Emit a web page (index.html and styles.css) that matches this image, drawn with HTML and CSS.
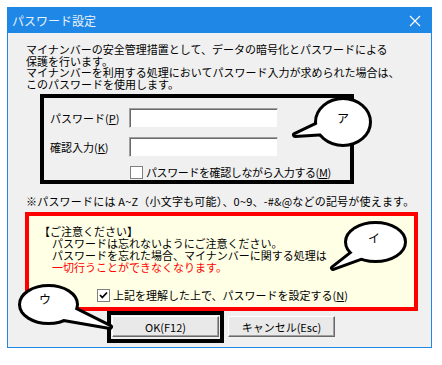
FILE: index.html
```html
<!DOCTYPE html>
<html lang="ja">
<head>
    <meta charset="UTF-8">
    <title>パスワード設定</title>
    <link rel="stylesheet" href="styles.css">
</head>
<body>
    <div class="window">
        <div class="titlebar">
            <span class="title">パスワード設定</span>
            <svg class="close" width="12" height="12" viewBox="0 0 12 12">
                <path d="M1 1L11 11M11 1L1 11" stroke="#fff" stroke-width="1.2"/>
            </svg>
        </div>

        <div class="content">
            <p class="intro">
                マイナンバーの安全管理措置として、データの暗号化とパスワードによる<br>
                保護を行います。<br>
                マイナンバーを利用する処理においてパスワード入力が求められた場合は、<br>
                このパスワードを使用します。
            </p>

            <!-- ア: 入力欄 -->
            <div class="field-box">
                <div class="field-row">
                    <label class="field-label">パスワード(<u>P</u>)</label>
                    <input type="password" class="text-input">
                </div>
                <div class="field-row">
                    <label class="field-label">確認入力(<u>K</u>)</label>
                    <input type="password" class="text-input">
                </div>
                <div class="check-row indent">
                    <span class="checkbox"></span>
                    <span class="tight">パスワードを確認しながら入力する(<u>M</u>)</span>
                </div>
            </div>

            <p class="note">※パスワードには A~Z（小文字も可能）、0~9、-#&amp;@などの記号が使えます。</p>

            <!-- イ: 注意事項 -->
            <div class="notice">
                <div class="notice-line">【ご注意ください】</div>
                <div class="notice-line sub">パスワードは忘れないようにご注意ください。</div>
                <div class="notice-line sub">パスワードを忘れた場合、マイナンバーに関する処理は</div>
                <div class="notice-line sub warn">一切行うことができなくなります。</div>
                <div class="check-row agree">
                    <span class="checkbox">
                        <svg width="11" height="11" viewBox="0 0 11 11">
                            <path d="M2 5L4.3 7.5L9 2.5" fill="none" stroke="#000" stroke-width="1.8"/>
                        </svg>
                    </span>
                    <span>上記を理解した上で、パスワードを設定する(<u>N</u>)</span>
                </div>
            </div>

            <!-- ウ: ボタン -->
            <div class="buttons">
                <div class="ok-box">
                    <button class="btn">OK(F12)</button>
                </div>
                <button class="btn cancel">キャンセル(Esc)</button>
            </div>
        </div>

        <!-- 吹き出し -->
        <svg class="callouts" width="425" height="341" viewBox="7 7 425 341">
            <g fill="#fff" stroke="#000" stroke-width="6" stroke-linejoin="round">
                <ellipse cx="343" cy="122" rx="26" ry="22"/>
                <polygon points="318,124 295,135 327,133"/>
                <ellipse cx="375.5" cy="242" rx="28.5" ry="18"/>
                <polygon points="356,250 333,268 366,256"/>
                <ellipse cx="48.5" cy="304.5" rx="27.5" ry="17.5"/>
                <polygon points="66,305 110,327 58,318"/>
            </g>
            <g fill="#fff">
                <ellipse cx="343" cy="122" rx="26" ry="22"/>
                <polygon points="318,124 295,135 327,133"/>
                <ellipse cx="375.5" cy="242" rx="28.5" ry="18"/>
                <polygon points="356,250 333,268 366,256"/>
                <ellipse cx="48.5" cy="304.5" rx="27.5" ry="17.5"/>
                <polygon points="66,305 110,327 58,318"/>
            </g>
            <g class="callout-text">
                <text x="343" y="123" text-anchor="middle">ア</text>
                <text x="374" y="243" text-anchor="middle">イ</text>
                <text x="45" y="304" text-anchor="middle">ウ</text>
            </g>
        </svg>
    </div>
</body>
</html>
```

FILE: styles.css
```css
body {
    margin: 0;
    background: #fff;
    font-family: "Noto Sans CJK JP", "Noto Sans", sans-serif;
    font-size: 11px;
    color: #000;
}
.window {
    position: relative;
    margin: 7px 0 0 7px;
    width: 425px;
    height: 341px;
    box-sizing: border-box;
    border: 1px solid #1f87e5;
    background: #f0f0f0;
    overflow: hidden;
}
.titlebar {
    height: 25px;
    background: #1f87e5;
    display: flex;
    align-items: center;
    justify-content: space-between;
    padding: 0 10px 0 4px;
    color: #fff;
}
.title {
    font-size: 12px;
    line-height: 12px;
    opacity: 0.9;
}
.close {
    margin-top: 1px;
}
.content {
    padding: 11px 13px 0 18px;
}
.intro {
    margin: 0;
    line-height: 11.5px;
}

/* ア */
.field-box {
    margin: 4px 0 0 14px;
    width: 314px;
    height: 90px;
    box-sizing: border-box;
    border: 4px solid #000;
    padding: 10px 0 0 6px;
}
.field-row {
    display: flex;
    align-items: center;
    height: 20px;
    margin-bottom: 9px;
}
.field-label {
    width: 79px;
}
.text-input {
    width: 149px;
    height: 20px;
    box-sizing: border-box;
    margin: 0;
    padding: 0;
    background: #fff;
    border: 1px solid;
    border-color: #a0a0a0 #f0f0f0 #f0f0f0 #a0a0a0;
    box-shadow: inset 1px 1px #696969;
}
.check-row {
    display: flex;
    align-items: center;
    height: 13px;
    line-height: 13px;
}
.check-row.indent {
    padding-left: 80px;
}
.tight {
    letter-spacing: -0.4px;
}
.checkbox {
    width: 13px;
    height: 13px;
    box-sizing: border-box;
    border: 1px solid #808080;
    background: #fff;
    margin-right: 3px;
    display: flex;
    align-items: center;
    justify-content: center;
    flex-shrink: 0;
}
.checkbox svg {
    display: block;
}
.note {
    margin: 11px 0 0 0;
    line-height: 12px;
    white-space: nowrap;
    letter-spacing: 0.2px;
}

/* イ */
.notice {
    margin: 5px 0 0 -1px;
    width: 393px;
    height: 99px;
    box-sizing: border-box;
    border: 4px solid #ff0000;
    background: #ffffe6;
    padding: 9px 0 0 10px;
}
.notice-line {
    line-height: 12px;
}
.notice-line.sub {
    padding-left: 13px;
}
.notice-line.warn {
    color: #ff0000;
}
.check-row.agree {
    margin: 16px 0 0 58px;
}

/* ウ */
.buttons {
    display: flex;
    align-items: flex-start;
    gap: 4px;
    margin-left: 81px;
}
.ok-box {
    border: 4px solid #000;
    padding: 1px 1px 2px 1px;
}
.btn {
    width: 107px;
    height: 21px;
    margin: 0;
    padding: 0;
    font-family: inherit;
    font-size: 11px;
    color: #000;
    background: #e9e9e9;
    border: 1px solid;
    border-color: #fff #696969 #696969 #fff;
    box-shadow: inset -1px -1px #a0a0a0;
}
.btn.cancel {
    margin-top: 5px;
}

/* 吹き出し */
.callouts {
    position: absolute;
    left: -1px;
    top: -1px;
    pointer-events: none;
}
.callout-text {
    font-family: "Noto Sans CJK JP", sans-serif;
    font-size: 12px;
    fill: #000;
}
```
